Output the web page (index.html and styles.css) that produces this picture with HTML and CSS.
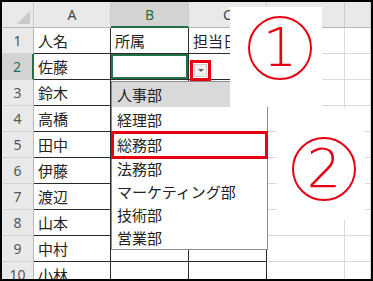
FILE: index.html
```html
<!DOCTYPE html>
<html lang="ja">
<head>
    <meta charset="UTF-8">
    <meta name="viewport" content="width=device-width, initial-scale=1.0">
    <title>入力規則ドロップダウン</title>
    <link rel="stylesheet" href="styles.css">
</head>
<body>
    <div class="frame">
        <div class="sheet">
            <div class="hd corner"><span class="tri"></span></div>
            <div class="hd">A</div>
            <div class="hd hd-sel">B</div>
            <div class="hd">C</div>
            <div class="hd">D</div>
            <div class="hd"></div>

            <div class="hd rn">1</div>
            <div class="cell b">人名</div>
            <div class="cell b">所属</div>
            <div class="cell b">担当日</div>
            <div class="cell"></div>
            <div class="cell"></div>

            <div class="hd rn rn-sel">2</div>
            <div class="cell b">佐藤</div>
            <div class="cell b sel"></div>
            <div class="cell b"></div>
            <div class="cell"></div>
            <div class="cell"></div>

            <div class="hd rn">3</div>
            <div class="cell b">鈴木</div>
            <div class="cell b"></div>
            <div class="cell b"></div>
            <div class="cell"></div>
            <div class="cell"></div>

            <div class="hd rn">4</div>
            <div class="cell b">高橋</div>
            <div class="cell b"></div>
            <div class="cell b"></div>
            <div class="cell"></div>
            <div class="cell"></div>

            <div class="hd rn">5</div>
            <div class="cell b">田中</div>
            <div class="cell b"></div>
            <div class="cell b"></div>
            <div class="cell"></div>
            <div class="cell"></div>

            <div class="hd rn">6</div>
            <div class="cell b">伊藤</div>
            <div class="cell b"></div>
            <div class="cell b"></div>
            <div class="cell"></div>
            <div class="cell"></div>

            <div class="hd rn">7</div>
            <div class="cell b">渡辺</div>
            <div class="cell b"></div>
            <div class="cell b"></div>
            <div class="cell"></div>
            <div class="cell"></div>

            <div class="hd rn">8</div>
            <div class="cell b">山本</div>
            <div class="cell b"></div>
            <div class="cell b"></div>
            <div class="cell"></div>
            <div class="cell"></div>

            <div class="hd rn">9</div>
            <div class="cell b">中村</div>
            <div class="cell b"></div>
            <div class="cell b"></div>
            <div class="cell"></div>
            <div class="cell"></div>

            <div class="hd rn">10</div>
            <div class="cell b">小林</div>
            <div class="cell b"></div>
            <div class="cell b"></div>
            <div class="cell"></div>
            <div class="cell"></div>
        </div>

        <div class="drop-mark"><span class="drop-btn"></span></div>

        <ul class="drop-list">
            <li class="active">人事部</li>
            <li>経理部</li>
            <li>総務部</li>
            <li>法務部</li>
            <li>マーケティング部</li>
            <li>技術部</li>
            <li>営業部</li>
        </ul>
        <div class="pick-mark"></div>

        <div class="note note-1"><span class="num">1</span></div>
        <div class="note note-2"><span class="num">2</span></div>
    </div>
</body>
</html>
```

FILE: styles.css
```css
body {
    margin: 0;
    font-family: "Noto Sans", "Noto Sans CJK JP", sans-serif;
    background-color: #fff;
}

.frame {
    position: relative;
    width: 373px;
    height: 281px;
    border: 2px solid #000;
    box-sizing: border-box;
    overflow: hidden;
    background-color: #fff;
}

.sheet {
    display: grid;
    grid-template-columns: 32px 77px 78px 78px 78px 26px;
    grid-auto-rows: 26px;
}

.hd {
    display: flex;
    align-items: center;
    justify-content: center;
    background-color: #e9e9e9;
    color: #444;
    font-size: 14px;
    border-right: 1px solid #cdcdcd;
    border-bottom: 1px solid #b8b8b8;
    box-sizing: border-box;
}

.hd-sel {
    background-color: #d3d3d3;
    color: #217346;
    border-bottom: 2px solid #217346;
}

.rn {
    color: #555;
    border-bottom: 1px solid #d4d4d4;
    border-right: 1px solid #b8b8b8;
}

.rn-sel {
    background-color: #d3d3d3;
    color: #217346;
    border-right: 2px solid #217346;
}

.corner {
    position: relative;
}

.tri {
    position: absolute;
    right: 3px;
    bottom: 3px;
    width: 0;
    height: 0;
    border-left: 13px solid transparent;
    border-bottom: 13px solid #c9c9c9;
}

.cell {
    display: flex;
    align-items: center;
    padding-left: 4px;
    font-size: 15px;
    color: #222;
    white-space: nowrap;
    overflow: hidden;
    border-right: 1px solid #dadada;
    border-bottom: 1px solid #dadada;
    box-sizing: border-box;
}

.cell.b {
    border-color: #2b2b2b;
}

.cell.sel {
    box-shadow: inset 0 0 0 2px #217346;
}

.drop-mark {
    position: absolute;
    left: 188px;
    top: 58px;
    width: 21px;
    height: 21px;
    border: 3px solid #e60012;
    box-sizing: border-box;
    display: flex;
    align-items: center;
    justify-content: center;
    background-color: #fff;
}

.drop-btn {
    width: 13px;
    height: 13px;
    background-color: #f1f1f1;
    border: 1px solid #d0d0d0;
    box-sizing: border-box;
    position: relative;
}

.drop-btn::after {
    content: "";
    position: absolute;
    left: 3px;
    top: 4px;
    border-left: 3px solid transparent;
    border-right: 3px solid transparent;
    border-top: 3px solid #666;
}

.drop-list {
    position: absolute;
    left: 109px;
    top: 79px;
    width: 157px;
    margin: 0;
    padding: 0;
    list-style: none;
    background-color: #fff;
    border: 1px solid #8c8c8c;
    box-sizing: border-box;
}

.drop-list li {
    height: 23px;
    display: flex;
    align-items: center;
    padding-left: 5px;
    font-size: 15px;
    color: #222;
    white-space: nowrap;
}

.drop-list li:nth-child(-n+3) {
    height: 25px;
}

.drop-list li.active {
    background-color: #d9d9d9;
}

.pick-mark {
    position: absolute;
    left: 109px;
    top: 129px;
    width: 157px;
    height: 28px;
    border: 3px solid #e60012;
    box-sizing: border-box;
}

.note {
    position: absolute;
    background-color: #fff;
    box-sizing: border-box;
}

.note-1 {
    left: 228px;
    top: 5px;
    width: 92px;
    height: 100px;
    padding: 9px 0 0 18px;
}

.note-2 {
    left: 275px;
    top: 106px;
    width: 88px;
    height: 112px;
    padding: 29px 0 0 15px;
}

.num {
    display: flex;
    align-items: center;
    justify-content: center;
    width: 64px;
    height: 64px;
    border: 2px solid #e60012;
    border-radius: 50%;
    box-sizing: border-box;
    color: #e60012;
    font-family: "DejaVu Sans", sans-serif;
    font-size: 54px;
    font-weight: 200;
    line-height: 1;
}
```
